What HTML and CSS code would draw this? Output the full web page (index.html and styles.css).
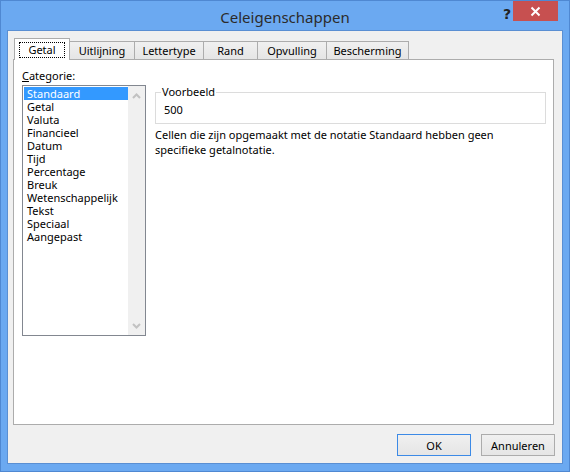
FILE: index.html
```html
<!DOCTYPE html>
<html>
<head>
<meta charset="UTF-8">
<title>Celeigenschappen</title>
<link rel="stylesheet" href="styles.css">
</head>
<body>
<div class="window">
	<div class="titlebar">
		<span class="title">Celeigenschappen</span>
		<span class="btn_help">?</span>
		<span class="btn_close">
			<svg width="11" height="11" viewBox="0 0 11 11"><path d="M1.5 1.5 L9.5 9.5 M9.5 1.5 L1.5 9.5" stroke="#fff" stroke-width="2"/></svg>
		</span>
	</div>
	<div class="client">
		<div class="tabs">
			<div class="tab tab_active"><span class="focus">Getal</span></div>
			<div class="tab w65">Uitlijning</div>
			<div class="tab w69">Lettertype</div>
			<div class="tab w54">Rand</div>
			<div class="tab w69">Opvulling</div>
			<div class="tab w82">Bescherming</div>
		</div>
		<div class="panel">
			<div class="col_left">
				<div class="lbl_cat"><u>C</u>ategorie:</div>
				<div class="listbox">
					<ul class="items">
						<li class="sel">Standaard</li>
						<li>Getal</li>
						<li>Valuta</li>
						<li>Financieel</li>
						<li>Datum</li>
						<li>Tijd</li>
						<li>Percentage</li>
						<li>Breuk</li>
						<li>Wetenschappelijk</li>
						<li>Tekst</li>
						<li>Speciaal</li>
						<li>Aangepast</li>
					</ul>
					<div class="scrollbar">
						<svg width="9" height="6" viewBox="0 0 9 6"><path d="M1 5 L4.5 1.5 L8 5" stroke="#c2c2c2" stroke-width="2" fill="none"/></svg>
						<svg width="9" height="6" viewBox="0 0 9 6"><path d="M1 1 L4.5 4.5 L8 1" stroke="#c2c2c2" stroke-width="2" fill="none"/></svg>
					</div>
				</div>
			</div>
			<div class="col_right">
				<div class="groupbox">
					<span class="legend">Voorbeeld</span>
					<div class="sample">500</div>
				</div>
				<p class="desc">Cellen die zijn opgemaakt met de notatie Standaard hebben geen specifieke getalnotatie.</p>
			</div>
		</div>
		<div class="buttons">
			<button class="btn btn_ok">OK</button>
			<button class="btn">Annuleren</button>
		</div>
	</div>
</div>
</body>
</html>
```
FILE: styles.css
```css
/* window frame */
body {
	margin: 0;
	font-family: "Noto Sans", "Open Sans", sans-serif;
	font-size: 11px;
	color: #000;
}

.window {
	width: 570px;
	height: 472px;
	box-sizing: border-box;
	background-color: #6ba9f1;
	border: 1px solid #4f88d2;
	padding: 0 6px 7px 6px;
	display: flex;
	flex-direction: column;
}

.titlebar {
	height: 29px;
	position: relative;
	display: flex;
	justify-content: center;
	align-items: center;
}

.title {
	font-size: 15px;
	color: #2b2b2b;
	margin-top: 2px;
}

.btn_help {
	position: absolute;
	right: 52px;
	top: 6px;
	font-family: "DejaVu Sans", sans-serif;
	font-weight: bold;
	font-size: 14px;
	line-height: 14px;
	color: #222;
}

.btn_close {
	position: absolute;
	right: 5px;
	top: 0;
	width: 45px;
	height: 20px;
	background-color: #c75050;
	display: flex;
	justify-content: center;
	align-items: center;
}

.client {
	flex: 1;
	background-color: #f0f0f0;
	border: 1px solid #5a8fd3;
	padding: 7px 7px 0 5px;
	display: flex;
	flex-direction: column;
}

/* tabs */
.tabs {
	display: flex;
	align-items: flex-end;
	height: 21px;
	padding-left: 1px;
}

.tab {
	box-sizing: border-box;
	height: 18px;
	border: 1px solid #acacac;
	border-bottom: 0;
	margin-left: -1px;
	background: linear-gradient(#f0f0f0, #e5e5e5);
	display: flex;
	justify-content: center;
	align-items: center;
	color: #000;
}

.tab_active {
	width: 56px;
	height: 22px;
	margin-bottom: -1px;
	background: #fff;
	position: relative;
	z-index: 1;
	margin-left: 0;
}

.focus {
	border: 1px dotted #000;
	padding: 0 8px;
	line-height: 14px;
}

.w65 { width: 66px; }
.w69 { width: 70px; }
.w54 { width: 55px; }
.w82 { width: 83px; }

.panel {
	box-sizing: border-box;
	width: 541px;
	height: 366px;
	background-color: #fff;
	border: 1px solid #acacac;
	display: flex;
	padding: 0 0 0 8px;
}

/* category list */
.col_left {
	width: 124px;
}

.lbl_cat {
	margin-top: 8px;
	height: 17px;
	line-height: 16px;
}

.listbox {
	box-sizing: border-box;
	height: 251px;
	border: 1px solid #828790;
	display: flex;
}

.items {
	list-style: none;
	margin: 0;
	padding: 1px 0 0 1px;
	flex: 1;
}

.items li {
	height: 13px;
	line-height: 13px;
	padding-left: 3px;
	white-space: nowrap;
}

.items li.sel {
	background-color: #3399ff;
	color: #fff;
}

.scrollbar {
	width: 17px;
	background-color: #f0f0f0;
	display: flex;
	flex-direction: column;
	justify-content: space-between;
	align-items: center;
	padding: 7px 0 6px 0;
}

/* sample area */
.col_right {
	margin-left: 9px;
	width: 391px;
}

.groupbox {
	box-sizing: border-box;
	margin-top: 32px;
	height: 32px;
	border: 1px solid #dcdcdc;
	position: relative;
	padding: 10px 0 0 8px;
}

.legend {
	position: absolute;
	left: 5px;
	top: -9px;
	background-color: #fff;
	padding: 0 1px;
	line-height: 15px;
}

.sample {
	line-height: 14px;
}

.desc {
	margin: 3px 0 0 0;
	line-height: 15px;
	width: 391px;
}

/* buttons */
.buttons {
	display: flex;
	justify-content: flex-end;
	gap: 10px;
	margin-top: 9px;
	width: 542px;
}

.btn {
	width: 74px;
	height: 22px;
	border: 1px solid #acacac;
	background: linear-gradient(#f0f0f0, #e5e5e5);
	font-family: "Noto Sans", "Open Sans", sans-serif;
	font-size: 11px;
	color: #000;
	padding: 0;
}

.btn_ok {
	border-color: #3c8ae6;
}
```
